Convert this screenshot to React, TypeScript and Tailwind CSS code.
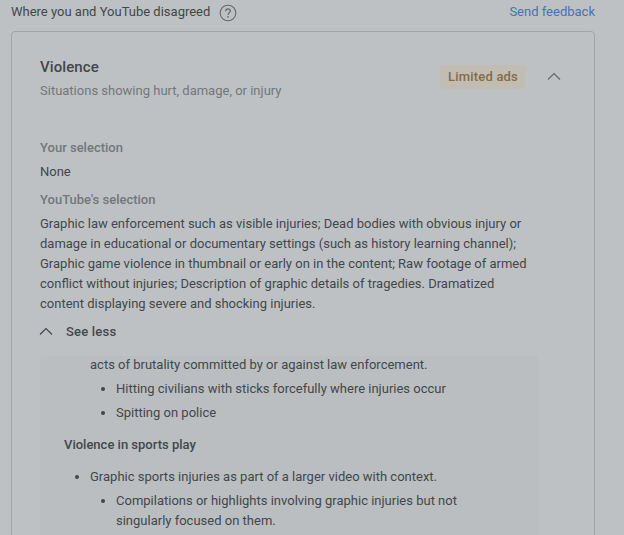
const PATHS = {
  up: 'M1 7.5 L7 1.5 L13 7.5',
}

function ChevronUp({ className }: { className: string }) {
  return (
    <svg width="14" height="9" viewBox="0 0 14 9" fill="none" className={className}>
      <path d={PATHS.up} stroke="currentColor" strokeWidth="1.2" />
    </svg>
  )
}

function HelpIcon() {
  return (
    <svg width="18" height="18" viewBox="0 0 18 18" fill="none" className="text-[#65696c]">
      <circle cx="9" cy="9" r="7.8" stroke="currentColor" strokeWidth="1.1" />
      <path
        d="M6.7 7.2 C6.7 5.8 7.7 4.9 9 4.9 C10.3 4.9 11.3 5.8 11.3 7.1 C11.3 8.7 9.1 8.8 9.1 10.7"
        stroke="currentColor"
        strokeWidth="1.3"
      />
      <rect x="8.4" y="12" width="1.4" height="1.5" fill="currentColor" />
    </svg>
  )
}

function Dot() {
  return <span className="mt-2 size-1 shrink-0 rounded-full bg-[#43474a]" />
}

export default function App() {
  return (
    <div className="h-[535px] w-[624px] overflow-hidden bg-[#bdc1c4] font-['Roboto',sans-serif] text-[13px] leading-5 text-[#43474a]">

      {/* Header */}
      <div className="flex h-[31px] items-start justify-between pt-0.5 pr-[29px] pl-[11px]">
        <div className="flex">
          <span className="w-[208px] whitespace-nowrap">Where you and YouTube disagreed</span>
          <span className="mt-0.5"><HelpIcon /></span>
        </div>
        <a className="text-[#4672b6]">Send feedback</a>
      </div>

      {/* Card */}
      <div className="ml-[11px] h-[520px] w-[584px] rounded border border-[#a1a5a8] pl-7">

        <div className="flex h-[106px] items-start pt-[25px]">
          <div className="w-[400px]">
            <h2 className="text-[15px] leading-5 font-medium tracking-[0.1px]">Violence</h2>
            <p className="mt-1 text-[#73777a]">Situations showing hurt, damage, or injury</p>
          </div>
          <span className="mt-2 flex h-6 w-[86px] items-center justify-center rounded-sm bg-[#c2bdb2] font-medium tracking-[0.2px] text-[#856b48]">
            Limited ads
          </span>
          <ChevronUp className="mt-[15px] ml-[21px] text-[#65696c]" />
        </div>

        {/* Selections */}
        <div className="font-medium text-[#73777a]">Your selection</div>
        <div className="mt-1">None</div>
        <div className="mt-2 font-medium text-[#73777a]">YouTube's selection</div>
        <p className="mt-1 whitespace-nowrap">
          Graphic law enforcement such as visible injuries; Dead bodies with obvious injury or<br />
          damage in educational or documentary settings (such as history learning channel);<br />
          Graphic game violence in thumbnail or early on in the content; Raw footage of armed<br />
          conflict without injuries; Description of graphic details of tragedies. Dramatized<br />
          content displaying severe and shocking injuries.
        </p>

        <button className="mt-2 flex items-center font-medium tracking-[0.2px]">
          <ChevronUp className="mr-[13px] mb-px ml-[-1px]" />
          See less
        </button>

        {/* Expanded guidelines */}
        <div className="mt-3.5 h-[190px] w-[498px] overflow-hidden rounded-t-sm bg-[#babec1] pl-6 whitespace-nowrap">
          <div className="-mt-px pl-[26px]">acts of brutality committed by or against law enforcement.</div>
          <div className="mt-1 flex gap-[11px] pl-[37px]"><Dot />Hitting civilians with sticks forcefully where injuries occur</div>
          <div className="mt-1 flex gap-[11px] pl-[37px]"><Dot />Spitting on police</div>
          <h3 className="mt-3 font-medium">Violence in sports play</h3>
          <div className="mt-3 flex gap-[11px] pl-[11px]"><Dot />Graphic sports injuries as part of a larger video with context.</div>
          <div className="mt-1 flex gap-[11px] pl-[37px]">
            <Dot />
            <span>
              Compilations or highlights involving graphic injuries but not<br />
              singularly focused on them.
            </span>
          </div>
        </div>
      </div>
    </div>
  )
}
